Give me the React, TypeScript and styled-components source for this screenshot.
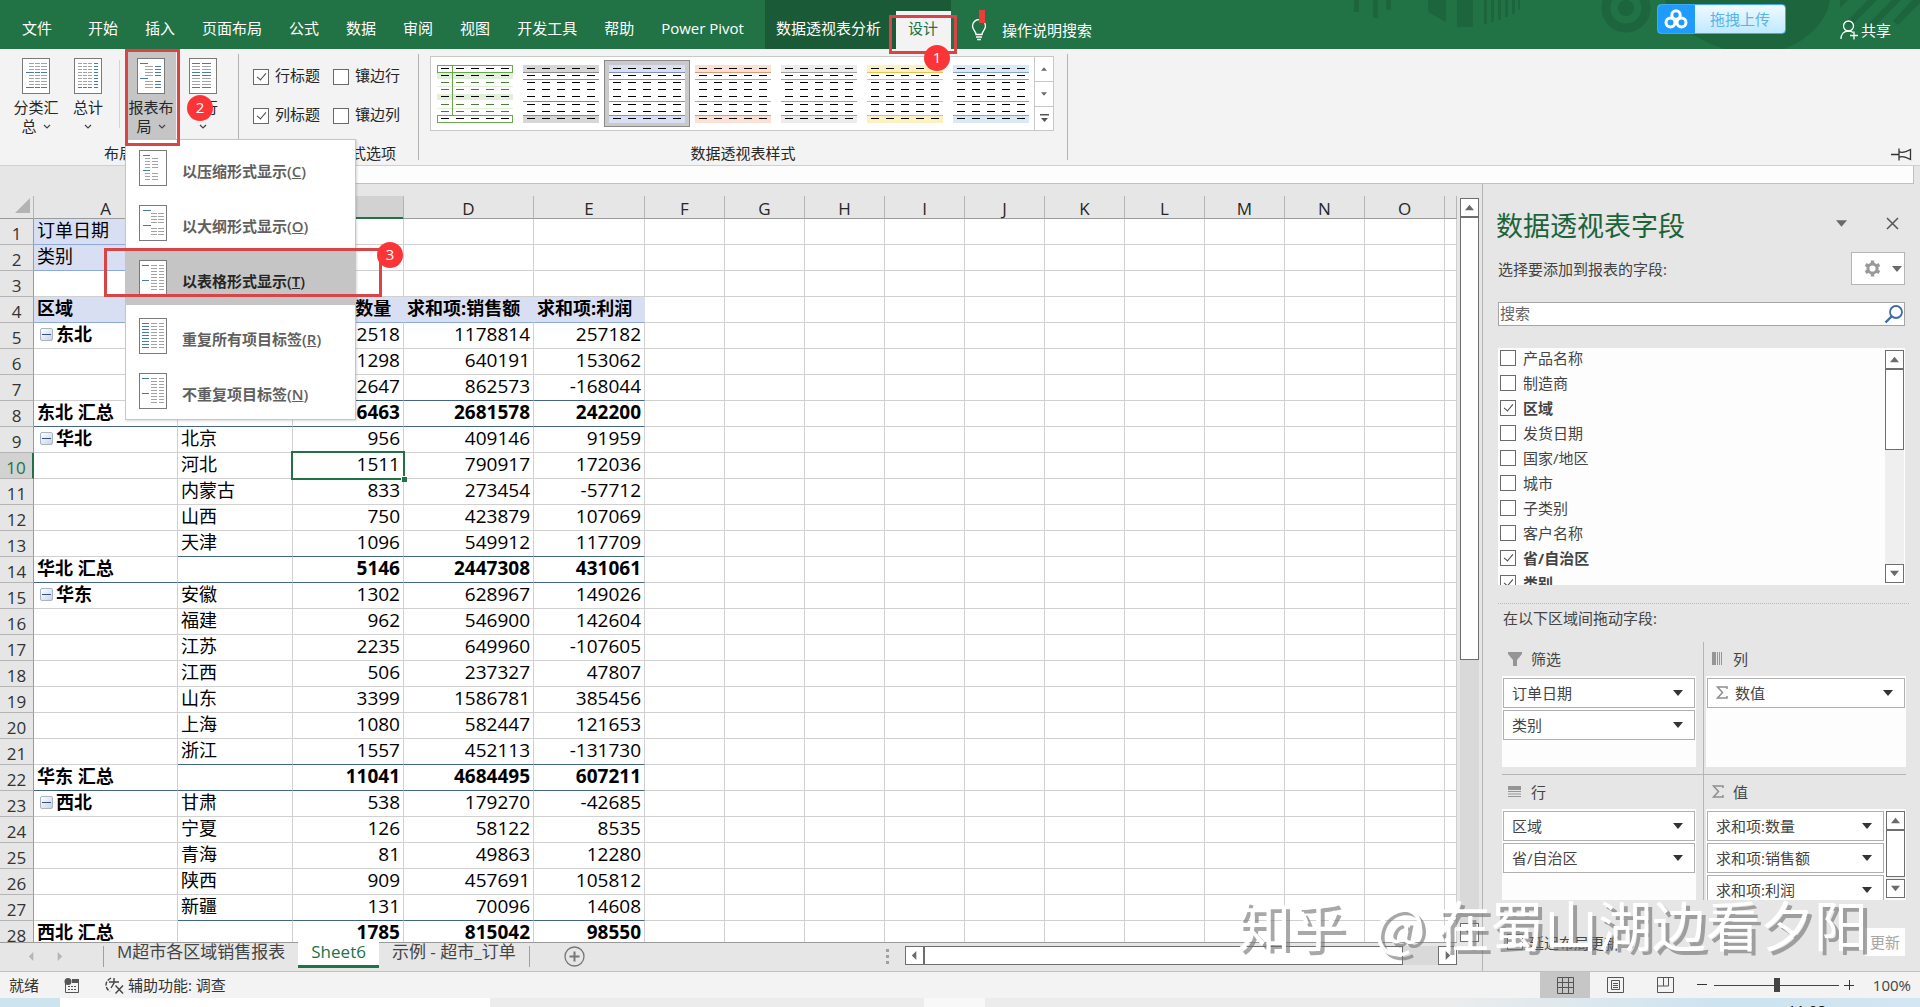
import React from "react";
import styled, { createGlobalStyle, css } from "styled-components";

const GlobalStyle = createGlobalStyle`
  *, *::before, *::after { box-sizing: border-box; }
  html, body { margin: 0; padding: 0; }
  body { overflow: hidden; }
  body, button, input {
    font-family: "Open Sans", "Noto Sans CJK SC", sans-serif;
    font-size: 15px;
    color: #262626;
  }
  button { border: 0; padding: 0; margin: 0; background: none; cursor: default; }
`;

const green = "#217346";
const red = "#d94546";

const Shell = styled.div`
  position: relative;
  display: flex;
  flex-direction: column;
  height: 100vh;
  min-width: 1200px;
  overflow: hidden;
  background: #e6e6e6;
`;

/* ---------- annotations ---------- */

const Mark = styled.span<{ $top: number; $right: number; $bottom: number; $left: number }>`
  position: absolute;
  z-index: 5;
  top: ${(p) => p.$top}px;
  right: ${(p) => p.$right}px;
  bottom: ${(p) => p.$bottom}px;
  left: ${(p) => p.$left}px;
  border: 3px solid ${red};
  pointer-events: none;
`;

const Badge = styled.span<{ $top: number; $left: number }>`
  position: absolute;
  z-index: 6;
  top: ${(p) => p.$top}px;
  left: ${(p) => p.$left}px;
  width: 26px;
  height: 26px;
  border-radius: 50%;
  background: #fb3537;
  color: #fff;
  font-size: 15px;
  line-height: 24px;
  text-align: center;
`;

/* ---------- title / tab bar ---------- */

const TabBar = styled.header`
  position: relative;
  display: flex;
  align-items: stretch;
  height: 49px;
  flex: none;
  padding-left: 8px;
  background: ${green};
`;

const Decor = styled.svg`
  position: absolute;
  right: 0;
  top: 0;
`;

const RibbonTab = styled.button<{ $file?: boolean }>`
  padding: 7px 13px 0 14px;
  margin-right: ${(p) => (p.$file ? 9 : 0)}px;
  color: #fff;
  line-height: 20px;
  white-space: nowrap;
`;

const ContextTabs = styled.div`
  display: flex;
  align-items: stretch;
  margin-left: 8px;
  background: #1a5a37;
`;

const ContextTab = styled(RibbonTab)`
  padding: 7px 15px 0 11px;
`;

const ActiveTab = styled(RibbonTab)`
  position: relative;
  margin-top: 11px;
  padding: 0 13px 4px 12px;
  background: #f3f3f3;
  color: ${green};
`;

const TellMe = styled.button`
  position: relative;
  display: flex;
  align-items: center;
  gap: 15px;
  margin-left: 20px;
  padding-top: 10px;
  color: #fff;
  line-height: 20px;
`;

const RedFlag = styled.span`
  position: absolute;
  left: 8px;
  top: 10px;
  width: 6px;
  height: 13px;
  background: #ee3b3b;
`;

const TabRight = styled.div`
  position: relative;
  display: flex;
  align-items: flex-start;
  margin-left: auto;
  padding-right: 29px;
  gap: 54px;
`;

const Upload = styled.button`
  display: flex;
  width: 129px;
  height: 30px;
  margin-top: 4px;
  border: 1px solid #3fa9f5;
  border-radius: 4px;
  overflow: hidden;
  background: linear-gradient(#f0faff, #bfe9ff);
  color: #58b4ea;
`;

const UploadIcon = styled.span`
  display: flex;
  align-items: center;
  justify-content: center;
  width: 37px;
  height: 100%;
  background: #1e9bfd;
`;

const UploadText = styled.span`
  flex: 1;
  line-height: 28px;
`;

const Share = styled.button`
  display: flex;
  align-items: center;
  gap: 2px;
  padding-top: 20px;
  color: #fff;
  line-height: 20px;
`;

/* ---------- ribbon ---------- */

const Ribbon = styled.section`
  position: relative;
  z-index: 3;
  display: flex;
  height: 117px;
  flex: none;
  background: #f3f3f3;
  border-bottom: 1px solid #d0d0d0;
`;

const Group = styled.div<{ $w?: number }>`
  display: flex;
  flex-direction: column;
  width: ${(p) => (p.$w ? p.$w + "px" : "auto")};
`;

const GroupBody = styled.div`
  display: flex;
  flex: 1;
`;

const GroupLabel = styled.div`
  height: 22px;
  line-height: 20px;
  text-align: center;
`;

const Sep = styled.span`
  width: 1px;
  margin: 5px 0;
  background: #b3b3b3;
`;

const ButtonRow = styled(GroupBody)`
  gap: 2px;
  padding: 1px 0 0 11px;
  align-items: flex-start;
`;

const SmallSep = styled.span`
  width: 1px;
  height: 68px;
  margin: 10px 4px 0;
  background: #d4d4d4;
`;

const Anchor = styled.div`
  position: relative;
`;

const BigButton = styled.button<{ $on?: boolean }>`
  display: flex;
  flex-direction: column;
  align-items: center;
  gap: 4px;
  width: 50px;
  height: 89px;
  padding-top: 8px;
  background: ${(p) => (p.$on ? "#c5c5c5" : "transparent")};
  line-height: 19px;
  white-space: nowrap;
`;

const LabelLine = styled.span`
  display: flex;
  align-items: center;
  justify-content: center;
  gap: 6px;
  height: 19px;
`;

const Menu = styled.ul`
  position: absolute;
  z-index: 4;
  top: 89px;
  left: -1px;
  width: 231px;
  margin: 0;
  padding: 0 0 1px;
  list-style: none;
  background: #fff;
  border: 1px solid #c6c6c6;
  box-shadow: 1px 1px 2px rgba(0, 0, 0, 0.15);
`;

const MenuItem = styled.li<{ $gap?: boolean }>`
  position: relative;
  margin-top: ${(p) => (p.$gap ? 3 : 0)}px;
`;

const MenuButton = styled.button<{ $on?: boolean }>`
  display: flex;
  align-items: flex-start;
  gap: 15px;
  width: 100%;
  height: 55px;
  padding: 10px 0 0 13px;
  background: ${(p) => (p.$on ? "#c5c5c5" : "transparent")};
  color: ${(p) => (p.$on ? "#262626" : "#5f5f5f")};
  font-weight: 600;
  line-height: 42px;
  white-space: nowrap;
`;

const Checks = styled.div`
  display: grid;
  grid-template-columns: 80px 80px;
  grid-auto-rows: 39px;
  padding: 8px 0 0 14px;
`;

const CheckLabel = styled.label<{ $bold?: boolean }>`
  display: flex;
  align-items: center;
  gap: 6px;
  font-weight: ${(p) => (p.$bold ? 700 : 400)};
  white-space: nowrap;
`;

const CheckText = styled.span`
  padding-bottom: 4px;
  line-height: 20px;
`;

const CheckBox = styled.input.attrs({ type: "checkbox" })`
  appearance: none;
  position: relative;
  flex: none;
  width: 16px;
  height: 16px;
  margin: 0;
  border: 1px solid #6a6a6a;
  background: #fff;
  &:checked::after {
    content: "";
    position: absolute;
    left: 5px;
    top: 1px;
    width: 5px;
    height: 9px;
    border: solid #444;
    border-width: 0 1px 1px 0;
    transform: rotate(40deg);
  }
`;

const Gallery = styled.div`
  display: flex;
  width: 624px;
  height: 75px;
  margin: 7px 13px 0 11px;
  padding-left: 1px;
  background: #fff;
  border: 1px solid #c8c8c8;
`;

const Thumb = styled.button<{ $on?: boolean }>`
  display: flex;
  align-items: center;
  justify-content: center;
  width: 86px;
  height: 67px;
  margin-top: 3px;
  border: 1px solid ${(p) => (p.$on ? "#8a8a8a" : "transparent")};
  background: ${(p) => (p.$on ? "#cacaca" : "transparent")};
`;

const GalleryScroll = styled.div`
  display: grid;
  grid-template-rows: 1fr 1fr 1fr;
  width: 19px;
  border-left: 1px solid #c8c8c8;
  & > button + button { border-top: 1px solid #c8c8c8; }
`;

const CenterButton = styled.button`
  display: flex;
  align-items: center;
  justify-content: center;
`;

const PinButton = styled.button`
  margin: auto 8px 0 auto;
  height: 20px;
`;

const FormulaBar = styled.input`
  display: block;
  flex: none;
  height: 18px;
  margin: 0 6px 0 200px;
  padding: 0 6px;
  border: 0;
  border-right: 1px solid #c0c0c0;
  border-bottom: 1px solid #c0c0c0;
  background: #fdfdfd;
  outline: none;
`;

/* ---------- work area ---------- */

const Work = styled.main`
  display: flex;
  flex: 1;
  min-height: 0;
`;

const Left = styled.div`
  display: flex;
  flex-direction: column;
  flex: 1;
  min-width: 0;
`;

const SheetRow = styled.div`
  display: flex;
  flex: 1;
  min-height: 0;
  padding-top: 12px;
`;

const SheetView = styled.div`
  flex: 1;
  min-width: 0;
  overflow: hidden;
`;

const Sheet = styled.table`
  width: 100%;
  table-layout: fixed;
  border-collapse: separate;
  border-spacing: 0;
  background: #fff;
  color: #000;
`;

const ColHead = styled.th<{ $on?: boolean }>`
  height: 23px;
  padding: 4px 0 0;
  border-right: 1px solid #b5b5b5;
  border-bottom: 1px solid #9b9b9b;
  background: ${(p) => (p.$on ? "#d2d2d2" : "#e6e6e6")};
  font-size: 17px;
  font-weight: 400;
  line-height: 18px;
  color: #262626;
  ${(p) => p.$on && css`box-shadow: inset 0 -1px 0 ${green}; border-bottom-color: ${green};`}
`;

const Corner = styled.th`
  padding: 0 3px 3px 0;
  border-right: 1px solid #b5b5b5;
  border-bottom: 1px solid #9b9b9b;
  background: #e6e6e6;
  text-align: right;
  line-height: 0;
`;

const RowHead = styled.th<{ $on?: boolean }>`
  height: 26px;
  padding: 4px 0 0;
  border-right: 1px solid #9b9b9b;
  border-bottom: 1px solid #b5b5b5;
  background: ${(p) => (p.$on ? "#d2d2d2" : "#e6e6e6")};
  color: ${(p) => (p.$on ? green : "#333")};
  font-size: 17px;
  font-weight: 400;
  line-height: 21px;
  ${(p) => p.$on && css`border-right: 2px solid ${green};`}
`;

type Line = "grid" | "soft" | "strong";
const lineColor: Record<Line, string> = { grid: "#d0d0d0", soft: "#8ea9db", strong: "#44648c" };

const Cell = styled.td<{ $line?: Line; $fill?: boolean; $bold?: boolean; $num?: boolean }>`
  position: relative;
  height: 26px;
  padding: 0 3px 2px;
  border-right: 1px solid ${(p) => (p.$fill ? "#d9dff2" : "#d0d0d0")};
  border-bottom: 1px solid ${(p) => lineColor[p.$line || "grid"]};
  background: ${(p) => (p.$fill ? "#d9dff2" : "#fff")};
  font-size: ${(p) => (p.$num ? 19 : 18)}px;
  font-weight: ${(p) => (p.$bold ? 700 : 400)};
  line-height: 23px;
  text-align: ${(p) => (p.$num ? "right" : "left")};
  white-space: nowrap;
`;

const CellInner = styled.span`
  display: flex;
  align-items: center;
  gap: 3px;
  height: 23px;
  padding-left: 3px;
`;

const Collapse = styled.button`
  display: flex;
  align-items: center;
  justify-content: center;
  width: 13px;
  height: 13px;
  border: 1px solid #a9b4c4;
  border-radius: 2px;
  background: linear-gradient(135deg, #fff, #c9d4e4);
  &::after { content: ""; width: 9px; height: 1px; background: #33518a; }
`;

const Selection = styled.span`
  position: absolute;
  z-index: 1;
  top: -2px;
  right: -2px;
  bottom: -2px;
  left: -2px;
  border: 2px solid ${green};
  &::after {
    content: "";
    position: absolute;
    right: -4px;
    bottom: -4px;
    width: 6px;
    height: 6px;
    background: ${green};
    border: solid #fff;
    border-width: 1px 0 0 1px;
  }
`;

/* ---------- scroll bars ---------- */

const VScroll = styled.div<{ $m?: string; $track?: string }>`
  display: flex;
  flex-direction: column;
  flex: none;
  width: 19px;
  margin: ${(p) => p.$m || "0"};
  background: ${(p) => p.$track || "#d9d9d9"};
`;

const ScrollButton = styled(CenterButton)`
  flex: none;
  width: 19px;
  height: 19px;
  border: 1px solid #6e6e6e;
  background: #fff;
`;

const VThumb = styled.span<{ $size: string }>`
  flex: none;
  height: ${(p) => p.$size};
  margin-bottom: auto;
  border: 1px solid #6e6e6e;
  background: #fff;
`;

const HScroll = styled.div`
  display: flex;
  flex: none;
  width: 552px;
  height: 19px;
  margin: 4px 25px 0 12px;
  background: #d9d9d9;
`;

const HThumb = styled.span`
  width: 479px;
  margin-right: auto;
  border: 1px solid #6e6e6e;
  background: #fff;
`;

/* ---------- sheet tabs ---------- */

const SheetTabs = styled.nav`
  display: flex;
  align-items: flex-start;
  flex: none;
  height: 29px;
  padding-left: 17px;
  background: linear-gradient(#9b9b9b, #9b9b9b) top left / calc(100% - 25px) 1px no-repeat #e6e6e6;
`;

const NavArrow = styled(CenterButton)`
  width: 28px;
  height: 28px;
`;

const TabSep = styled.span`
  width: 1px;
  height: 21px;
  margin-top: 4px;
  background: #a0a0a0;
`;

const TabList = styled.div`
  display: flex;
  margin-left: 30px;
`;

const SheetTab = styled.button<{ $on?: boolean }>`
  height: 26px;
  padding: 0 13px 3px;
  background: ${(p) => (p.$on ? "#fff" : "transparent")};
  border-bottom: 3px solid ${(p) => (p.$on ? green : "transparent")};
  color: ${(p) => (p.$on ? green : "#444")};
  font-size: 17px;
  line-height: 20px;
  white-space: nowrap;
`;

const AddSheet = styled(CenterButton)`
  margin: 4px 0 0 34px;
`;

const Grip = styled.span`
  width: 3px;
  height: 15px;
  margin: 7px 4px 0 auto;
  background: repeating-linear-gradient(#a0a0a0 0 3px, transparent 3px 6px);
`;

/* ---------- field pane ---------- */

const Pane = styled.aside`
  display: flex;
  flex-direction: column;
  flex: none;
  width: 438px;
  padding: 22px 15px 15px;
  border-left: 1px solid #b5b5b5;
  color: #444;
`;

const PaneHead = styled.div`
  display: flex;
  align-items: flex-start;
  height: 40px;
`;

const PaneTitle = styled.h2`
  flex: 1;
  margin: 0 0 0 -2px;
  font-size: 27px;
  font-weight: 400;
  line-height: 40px;
  color: #1d6339;
`;

const HeadButton = styled(CenterButton)`
  width: 25px;
  height: 34px;
  margin-left: 26px;
`;

const SubRow = styled.div`
  display: flex;
  justify-content: space-between;
  align-items: center;
  height: 33px;
  margin-top: 6px;
`;

const GearButton = styled.button`
  display: flex;
  align-items: center;
  gap: 11px;
  width: 54px;
  height: 33px;
  padding-left: 12px;
  border: 1px solid #b5b5b5;
  background: #fff;
`;

const SearchBox = styled.label`
  display: flex;
  align-items: center;
  flex: none;
  height: 24px;
  margin-top: 17px;
  border: 1px solid #a6a6a6;
  background: #fff;
`;

const SearchInput = styled.input`
  flex: 1;
  height: 22px;
  padding: 0 1px 2px;
  border: 0;
  outline: none;
  background: transparent;
  &::placeholder { color: #666; opacity: 1; }
`;

const FieldBox = styled.div`
  display: flex;
  flex: 1;
  min-height: 0;
  margin-top: 22px;
  background: #fdfdfd;
  overflow: hidden;
`;

const FieldList = styled.div`
  flex: 1;
  padding: 1px 0 0 2px;
  & > label { height: 25px; padding-bottom: 8px; gap: 7px; }
`;

const LabelText = styled.span`
  padding-top: 1px;
  line-height: 20px;
`;

const Dotted = styled.div`
  flex: none;
  height: 1px;
  margin: 18px -4px 0 0;
  border-top: 1px dotted #b9b9b9;
`;

const Hint = styled.div`
  margin-top: 4px;
  padding-left: 5px;
  line-height: 20px;
`;

const Areas = styled.div`
  display: grid;
  grid-template-columns: 202px 1fr;
  margin: 14px -1px 0 4px;
`;

const Area = styled.section<{ $left?: boolean; $top?: boolean }>`
  padding-right: ${(p) => (p.$left ? 7 : 0)}px;
  padding-left: ${(p) => (p.$left ? 0 : 2)}px;
  padding-bottom: ${(p) => (p.$top ? 7 : 0)}px;
  border-right: ${(p) => (p.$left ? "1px solid #b5b5b5" : "0")};
  border-bottom: ${(p) => (p.$top ? "1px solid #b5b5b5" : "0")};
`;

const AreaTitle = styled.h3`
  display: flex;
  align-items: center;
  gap: 9px;
  height: 34px;
  margin: 0;
  padding: 0 0 1px 6px;
  font-size: 15px;
  font-weight: 400;
`;

const AreaBox = styled.div`
  display: flex;
  height: 91px;
  padding: 2px 1px 0;
  overflow: hidden;
  background: #fdfdfd;
`;

const AreaItems = styled.div`
  display: flex;
  flex-direction: column;
  flex: 1;
  gap: 2px;
`;

const AreaItem = styled.button`
  display: flex;
  align-items: center;
  flex: none;
  gap: 7px;
  height: 30px;
  padding: 0 11px 1px 8px;
  border: 1px solid #b0b0b0;
  background: #fff;
  color: #444;
  line-height: 20px;
  & > svg:last-child { margin-left: auto; }
`;

const Defer = styled.div`
  display: flex;
  align-items: center;
  justify-content: space-between;
  height: 28px;
  margin-top: 28px;
  padding-left: 9px;
`;

const UpdateButton = styled.button`
  width: 40px;
  height: 28px;
  padding-bottom: 2px;
  background: #fdfdfd;
  color: #a6a6a6;
`;

/* ---------- status bar ---------- */

const Status = styled.footer`
  display: flex;
  align-items: center;
  flex: none;
  height: 27px;
  padding-left: 9px;
  border-top: 1px solid #c0c0c0;
  background: #f3f3f3;
  color: #444;
`;

const StatusItem = styled.button`
  display: flex;
  align-items: center;
  gap: 4px;
  margin-right: 25px;
  line-height: 20px;
  color: #333;
`;

const ViewButton = styled(CenterButton)<{ $on?: boolean }>`
  width: 50px;
  height: 26px;
  background: ${(p) => (p.$on ? "#c6c6c6" : "transparent")};
`;

const Views = styled.div`
  display: flex;
  margin: 0 6px 0 auto;
`;

const ZoomButton = styled(CenterButton)`
  width: 12px;
  height: 20px;
`;

const Zoom = styled.input.attrs({ type: "range" })`
  appearance: none;
  width: 125px;
  height: 14px;
  margin: 0 4px 0 6px;
  background: linear-gradient(#444, #444) center / 100% 1px no-repeat;
  &::-webkit-slider-thumb {
    appearance: none;
    width: 6px;
    height: 14px;
    background: #444;
  }
`;

const ZoomText = styled.button`
  width: 48px;
  margin: 0 9px 0 8px;
  text-align: right;
  line-height: 20px;
  color: #444;
`;

const Taskbar = styled.div`
  display: flex;
  flex: none;
  height: 9px;
  overflow: hidden;
  background: linear-gradient(90deg, #ececec 75%, #cde3f0 90%, #d3e6f1);
`;

const TaskPart = styled.span<{ $w: number; $ml?: number; $bg: string }>`
  width: ${(p) => p.$w}px;
  margin-left: ${(p) => p.$ml || 0}px;
  background: ${(p) => p.$bg};
`;

const Clock = styled.span`
  margin-left: auto;
  padding: 2px 94px 0 0;
  font-size: 15px;
  line-height: 20px;
  color: #111;
`;

const Watermark = styled.div`
  position: absolute;
  z-index: 8;
  right: 52px;
  bottom: 56px;
  display: flex;
  gap: 11px;
  font-family: "Noto Sans CJK SC", sans-serif;
  font-size: 54px;
  line-height: 54px;
  color: #fff;
  text-shadow: 4px 4px 0 rgba(110, 110, 110, 0.6);
  white-space: nowrap;
  pointer-events: none;
`;

const Site = styled.span`
  margin-right: 18px;
`;

/* ---------- drawings ---------- */

const Chevron = () => (
  <svg width="8" height="6" viewBox="0 0 8 6" fill="none" stroke="#444" strokeWidth="1.2">
    <path d="M1 1l3 3 3-3" />
  </svg>
);

const Tri = ({ dir = "down", size = 9, color = "#6a6a6a" }: { dir?: string; size?: number; color?: string }) => {
  const d: Record<string, string> = {
    down: "M0 2h10L5 8z",
    up: "M0 8h10L5 2z",
    left: "M7 0v10L2 5z",
    right: "M3 0v10l5-5z",
  };
  return (
    <svg width={size} height={size} viewBox="0 0 10 10">
      <path d={d[dir]} fill={color} />
    </svg>
  );
};

type DocKind = "subtotal" | "total" | "layout" | "blank" | "compact" | "outline" | "tabular" | "repeat";

const DocIcon = ({ kind }: { kind: DocKind }) => {
  const lines: React.ReactNode[] = [];
  const grey = "#a3a3a3";
  const blue = "#4a7ba3";
  const put = (x: number, y: number, w: number, c: string) =>
    lines.push(<rect key={lines.length} x={x} y={y} width={w} height="1" fill={c} />);
  for (let i = 0; i < 9; i++) {
    const y = 5 + i * 3;
    if (kind === "subtotal") {
      const c = i === 3 || i === 8 ? blue : grey;
      put(c === blue ? 4 : 7, y, c === blue ? 8 : 5, c);
      put(13, y, 5, c);
      put(19, y, 6, c);
    } else if (kind === "total") {
      [4, 9, 14].forEach((x) => put(x, y, 4, i === 8 ? blue : grey));
      put(20, y, 4, blue);
    } else if (kind === "blank") {
      const c = i % 4 === 0 || i === 3 ? blue : grey;
      put(3, y, 8, c);
      put(13, y, 9, c);
    } else if (kind === "layout") {
      if (i === 0 || i === 5) put(3, y, 8, blue);
      else {
        put(8, y, 8, grey);
        put(18, y, 6, blue);
      }
    } else if (kind === "compact") {
      if (i === 0 || i === 5) put(4, y, 7, blue);
      else {
        put(6, y, 5, grey);
        put(13, y, 6, grey);
      }
    } else if (kind === "outline") {
      if (i === 0 || i === 5) put(4, y, 8, blue);
      else {
        put(12, y, 6, grey);
        put(19, y, 6, grey);
      }
    } else {
      if (kind === "repeat") put(3, y, 7, blue);
      else if (i === 0 || i === 5) put(3, y, 7, blue);
      put(12, y, 6, grey);
      put(20, y, 5, grey);
    }
  }
  return (
    <svg width="28" height="36" viewBox="0 0 28 36" shapeRendering="crispEdges">
      <rect x="0.5" y="0.5" width="27" height="35" fill="#fff" stroke="#7a7a7a" />
      {lines}
    </svg>
  );
};

const StyleThumb = ({ band, line, classic }: { band: string; line: string; classic?: boolean }) => {
  const rows = [0, 1, 2, 3, 4, 5, 6, 7];
  return (
    <svg width="76" height="58" viewBox="0 0 76 58" shapeRendering="crispEdges">
      <rect width="76" height="58" fill="#fff" />
      {classic ? (
        <>
          <rect y="8" width="76" height="6" fill={band} />
          <rect y="29" width="76" height="6" fill={band} />
          <rect y="21" width="76" height="1" fill={band} />
          <rect y="43" width="76" height="1" fill={band} />
          <rect x="0.5" y="0.5" width="75" height="7" fill="none" stroke={line} />
          <rect x="0.5" y="50.5" width="75" height="7" fill="none" stroke={line} />
          <rect x="15" y="0" width="1" height="50" fill={line} />
        </>
      ) : (
        <>
          <rect width="76" height="7" fill={band} />
          <rect y="51" width="76" height="7" fill={band} />
          <rect y="7" width="76" height="1" fill={line} />
          <rect y="14" width="76" height="1" fill={line} />
          <rect y="36" width="76" height="1" fill={line} />
          <rect y="50" width="76" height="1" fill={line} />
        </>
      )}
      {rows.map((r) =>
        [4, 19, 34, 49, 64].map((x) => (
          <rect
            key={`${r}-${x}`}
            x={x}
            y={3 + r * 7 + (r > 4 ? 1 : 0)}
            width="8"
            height="1"
            fill={classic && [2, 3, 5, 6].includes(r) ? "#4d7a3a" : "#000"}
          />
        ))
      )}
    </svg>
  );
};

const Sigma = () => (
  <svg width="12" height="13" viewBox="0 0 12 13" fill="none" stroke="#8f8f8f" strokeWidth="1.5">
    <path d="M11 3V1H1.5L6.500 6.500 1.500 12H11v-2" />
  </svg>
);

const Funnel = () => (
  <svg width="14" height="14" viewBox="0 0 14 14">
    <path d="M0 0h14v2L9 8v6H5V8L0 2z" fill="#959595" />
  </svg>
);

const ColsIcon = () => (
  <svg width="12" height="13" viewBox="0 0 12 13" fill="#959595">
    <path d="M0 0h4v13H0zM5 0h1v13H5zM7 0h1v13H7zM9 0h1v13H9z" />
  </svg>
);

const RowsIcon = () => (
  <svg width="14" height="12" viewBox="0 0 14 12" fill="#959595">
    <path d="M0 0h13v4H0zM0 5h13v1H0zM0 7.500h13v1H0zM0 10h13v1H0z" />
  </svg>
);

/* ---------- data ---------- */

const tabs = ["文件", "开始", "插入", "页面布局", "公式", "数据", "审阅", "视图", "开发工具", "帮助", "Power Pivot"];

const thumbs = [
  { name: "浅色 绿", band: "#e2efda", line: "#6aa84f", classic: true },
  { name: "浅色 灰", band: "#d6d6d6", line: "#8c8c8c" },
  { name: "浅色 蓝", band: "#d9dff5", line: "#7e93c0", on: true },
  { name: "浅色 橙", band: "#fbe0d3", line: "#dd9a78" },
  { name: "浅色 银", band: "#ececec", line: "#a5a5a5" },
  { name: "浅色 黄", band: "#fff0c4", line: "#e8c54a" },
  { name: "浅色 天蓝", band: "#dbe9f7", line: "#84a8cc" },
];

const menuItems: { text: string; key: string; kind: DocKind; on?: boolean; gap?: boolean }[] = [
  { text: "以压缩形式显示", key: "C", kind: "compact" },
  { text: "以大纲形式显示", key: "O", kind: "outline" },
  { text: "以表格形式显示", key: "T", kind: "tabular", on: true },
  { text: "重复所有项目标签", key: "R", kind: "repeat", gap: true },
  { text: "不重复项目标签", key: "N", kind: "tabular" },
];

type Row = { a?: string; b?: string; v?: string[]; kind?: "filter" | "head" | "region" | "total" };
const rows: Row[] = [
  { a: "订单日期", kind: "filter" },
  { a: "类别", kind: "filter" },
  {},
  { a: "区域", v: ["求和项:数量", "求和项:销售额", "求和项:利润"], kind: "head" },
  { a: "东北", v: ["2518", "1178814", "257182"], kind: "region" },
  { v: ["1298", "640191", "153062"] },
  { v: ["2647", "862573", "-168044"] },
  { a: "东北 汇总", v: ["6463", "2681578", "242200"], kind: "total" },
  { a: "华北", b: "北京", v: ["956", "409146", "91959"], kind: "region" },
  { b: "河北", v: ["1511", "790917", "172036"] },
  { b: "内蒙古", v: ["833", "273454", "-57712"] },
  { b: "山西", v: ["750", "423879", "107069"] },
  { b: "天津", v: ["1096", "549912", "117709"] },
  { a: "华北 汇总", v: ["5146", "2447308", "431061"], kind: "total" },
  { a: "华东", b: "安徽", v: ["1302", "628967", "149026"], kind: "region" },
  { b: "福建", v: ["962", "546900", "142604"] },
  { b: "江苏", v: ["2235", "649960", "-107605"] },
  { b: "江西", v: ["506", "237327", "47807"] },
  { b: "山东", v: ["3399", "1586781", "385456"] },
  { b: "上海", v: ["1080", "582447", "121653"] },
  { b: "浙江", v: ["1557", "452113", "-131730"] },
  { a: "华东 汇总", v: ["11041", "4684495", "607211"], kind: "total" },
  { a: "西北", b: "甘肃", v: ["538", "179270", "-42685"], kind: "region" },
  { b: "宁夏", v: ["126", "58122", "8535"] },
  { b: "青海", v: ["81", "49863", "12280"] },
  { b: "陕西", v: ["909", "457691", "105812"] },
  { b: "新疆", v: ["131", "70096", "14608"] },
  { a: "西北 汇总", v: ["1785", "815042", "98550"], kind: "total" },
];

const colWidths = [34, 144, 115, 111, 130, 111, 80, 80, 80, 80, 80, 80, 80, 80, 80, 80];
const letters = "ABCDEFGHIJKLMNO".split("");

const fields: [string, boolean][] = [
  ["产品名称", false],
  ["制造商", false],
  ["区域", true],
  ["发货日期", false],
  ["国家/地区", false],
  ["城市", false],
  ["子类别", false],
  ["客户名称", false],
  ["省/自治区", true],
  ["类别", true],
];

/* ---------- parts ---------- */

const SheetTable = () => (
  <Sheet>
    <colgroup>
      {colWidths.map((w, i) => (
        <col key={i} width={w} />
      ))}
      <col />
    </colgroup>
    <thead>
      <tr>
        <Corner>
          <svg width="15" height="15" viewBox="0 0 15 15">
            <path d="M15 0v15H0z" fill="#b3b3b3" />
          </svg>
        </Corner>
        {letters.map((l) => (
          <ColHead key={l} $on={l === "C"}>
            {l}
          </ColHead>
        ))}
        <ColHead />
      </tr>
    </thead>
    <tbody>
      {rows.map((r, i) => {
        const total = r.kind === "total";
        const head = r.kind === "head";
        const beforeTotal = rows[i + 1]?.kind === "total";
        const line: Line = total || beforeTotal ? "strong" : head ? "soft" : "grid";
        return (
          <tr key={i}>
            <RowHead $on={i === 9}>{i + 1}</RowHead>
            <Cell
              $fill={head || r.kind === "filter"}
              $bold={total || head || r.kind === "region"}
              $line={total ? "strong" : head || r.kind === "filter" ? "soft" : "grid"}
            >
              {r.kind === "region" ? (
                <CellInner>
                  <Collapse aria-label="折叠" />
                  {r.a}
                </CellInner>
              ) : (
                r.a
              )}
            </Cell>
            <Cell $fill={head} $line={line}>
              {r.b}
            </Cell>
            {[0, 1, 2].map((c) => (
              <Cell key={c} $fill={head} $line={line} $bold={total || head} $num={!head}>
                {r.v?.[c]}
                {i === 9 && c === 0 && <Selection />}
              </Cell>
            ))}
            {Array.from({ length: 11 }, (_, c) => (
              <Cell key={c} />
            ))}
          </tr>
        );
      })}
    </tbody>
  </Sheet>
);

const Item = ({ text, sigma }: { text: string; sigma?: boolean }) => (
  <AreaItem>
    {sigma && <Sigma />}
    {text}
    <Tri size={10} color="#333" />
  </AreaItem>
);

const FieldPane = () => (
  <Pane>
    <PaneHead>
      <PaneTitle>数据透视表字段</PaneTitle>
      <HeadButton aria-label="任务窗格选项">
        <Tri size={11} />
      </HeadButton>
      <HeadButton aria-label="关闭">
        <svg width="13" height="13" viewBox="0 0 13 13" stroke="#555" strokeWidth="1.5">
          <path d="M1 1l11 11M12 1L1 12" />
        </svg>
      </HeadButton>
    </PaneHead>
    <SubRow>
      <span>选择要添加到报表的字段:</span>
      <GearButton aria-label="工具">
        <svg width="17" height="17" viewBox="0 0 17 17">
          <circle cx="8.5" cy="8.5" r="4.600" fill="none" stroke="#999" strokeWidth="3" />
          <g stroke="#999" strokeWidth="3.400">
            <path d="M8.500 0.500v3M8.500 13.500v3M1.600 4.500l2.600 1.500M12.800 11l2.600 1.500M15.400 4.500l-2.600 1.500M4.200 11l-2.600 1.500" />
          </g>
        </svg>
        <Tri size={10} />
      </GearButton>
    </SubRow>
    <SearchBox>
      <SearchInput placeholder="搜索" aria-label="搜索" />
      <svg width="20" height="20" viewBox="0 0 20 20" fill="none" stroke="#3f6c9c" strokeWidth="1.800">
        <circle cx="12" cy="8" r="6" />
        <path d="M7.500 12.500L1.500 18.500" strokeWidth="2.400" />
      </svg>
    </SearchBox>
    <FieldBox>
      <FieldList>
        {fields.map(([name, on]) => (
          <CheckLabel key={name} $bold={on}>
            <CheckBox defaultChecked={on} />
            <LabelText>{name}</LabelText>
          </CheckLabel>
        ))}
      </FieldList>
      <VScroll $m="2px 1px 2px 0" $track="#efefef">
        <ScrollButton aria-label="向上">
          <Tri dir="up" />
        </ScrollButton>
        <VThumb $size="81px" />
        <ScrollButton aria-label="向下">
          <Tri />
        </ScrollButton>
      </VScroll>
    </FieldBox>
    <Dotted />
    <Hint>在以下区域间拖动字段:</Hint>
    <Areas>
      <Area $left $top>
        <AreaTitle>
          <Funnel />
          筛选
        </AreaTitle>
        <AreaBox>
          <AreaItems>
            <Item text="订单日期" />
            <Item text="类别" />
          </AreaItems>
        </AreaBox>
      </Area>
      <Area $top>
        <AreaTitle>
          <ColsIcon />
          列
        </AreaTitle>
        <AreaBox>
          <AreaItems>
            <Item text="数值" sigma />
          </AreaItems>
        </AreaBox>
      </Area>
      <Area $left>
        <AreaTitle>
          <RowsIcon />
          行
        </AreaTitle>
        <AreaBox>
          <AreaItems>
            <Item text="区域" />
            <Item text="省/自治区" />
          </AreaItems>
        </AreaBox>
      </Area>
      <Area>
        <AreaTitle>
          <Sigma />
          值
        </AreaTitle>
        <AreaBox>
          <AreaItems>
            <Item text="求和项:数量" />
            <Item text="求和项:销售额" />
            <Item text="求和项:利润" />
          </AreaItems>
          <VScroll $m="0 0 2px 2px" $track="#efefef">
            <ScrollButton aria-label="向上">
              <Tri dir="up" />
            </ScrollButton>
            <VThumb $size="47px" />
            <ScrollButton aria-label="向下">
              <Tri />
            </ScrollButton>
          </VScroll>
        </AreaBox>
      </Area>
    </Areas>
    <Defer>
      <CheckLabel>
        <CheckBox />
        延迟布局更新
      </CheckLabel>
      <UpdateButton>更新</UpdateButton>
    </Defer>
  </Pane>
);

const RibbonBar = () => (
  <Ribbon>
    <Group $w={238}>
      <ButtonRow>
        <BigButton>
          <DocIcon kind="subtotal" />
          <span>
            <LabelLine>分类汇</LabelLine>
            <LabelLine>
              总 <Chevron />
            </LabelLine>
          </span>
        </BigButton>
        <BigButton>
          <DocIcon kind="total" />
          <span>
            <LabelLine>总计</LabelLine>
            <LabelLine>
              <Chevron />
            </LabelLine>
          </span>
        </BigButton>
        <SmallSep />
        <Anchor>
          <BigButton $on>
            <DocIcon kind="layout" />
            <span>
              <LabelLine>报表布</LabelLine>
              <LabelLine>
                局 <Chevron />
              </LabelLine>
            </span>
          </BigButton>
          <Menu>
            {menuItems.map((m) => (
              <MenuItem key={m.text} $gap={m.gap}>
                <MenuButton $on={m.on}>
                  <DocIcon kind={m.kind} />
                  <span>
                    {m.text}(<u>{m.key}</u>)
                  </span>
                </MenuButton>
                {m.on && (
                  <>
                    <Mark $top={-2} $right={-27} $bottom={8} $left={-22} />
                    <Badge $top={-8} $left={251}>
                      3
                    </Badge>
                  </>
                )}
              </MenuItem>
            ))}
          </Menu>
          <Mark $top={-1} $right={-4} $bottom={-7} $left={-1} />
        </Anchor>
        <Anchor>
          <BigButton>
            <DocIcon kind="blank" />
            <span>
              <LabelLine>空行</LabelLine>
              <LabelLine>
                <Chevron />
              </LabelLine>
            </span>
          </BigButton>
          <Badge $top={45} $left={9}>
            2
          </Badge>
        </Anchor>
      </ButtonRow>
      <GroupLabel>布局</GroupLabel>
    </Group>
    <Sep />
    <Group $w={179}>
      <GroupBody>
        <Checks>
          {["行标题", "镶边行", "列标题", "镶边列"].map((t, i) => (
            <CheckLabel key={t}>
              <CheckBox defaultChecked={i % 2 === 0} />
              <CheckText>{t}</CheckText>
            </CheckLabel>
          ))}
        </Checks>
      </GroupBody>
      <GroupLabel>数据透视表样式选项</GroupLabel>
    </Group>
    <Sep />
    <Group>
      <GroupBody>
        <Gallery>
          {thumbs.map((t) => (
            <Thumb key={t.name} $on={t.on} aria-label={t.name}>
              <StyleThumb band={t.band} line={t.line} classic={t.classic} />
            </Thumb>
          ))}
          <GalleryScroll>
            <CenterButton aria-label="上一行">
              <Tri dir="up" size={6} />
            </CenterButton>
            <CenterButton aria-label="下一行">
              <Tri size={6} />
            </CenterButton>
            <CenterButton aria-label="其他">
              <svg width="9" height="9" viewBox="0 0 9 9" fill="#555">
                <path d="M0 0h9v1.500H0zM1 4h7L4.500 8z" />
              </svg>
            </CenterButton>
          </GalleryScroll>
        </Gallery>
      </GroupBody>
      <GroupLabel>数据透视表样式</GroupLabel>
    </Group>
    <Sep />
    <PinButton aria-label="固定功能区">
      <svg width="21" height="13" viewBox="0 0 21 13" fill="none" stroke="#333" strokeWidth="1.300">
        <path d="M0 6.500h8M8 0.500v12M8 3.500c3 2 6 1 11.500-2v10C14 8.500 11 7.500 8 9.500" />
      </svg>
    </PinButton>
  </Ribbon>
);

export default function App() {
  return (
    <Shell>
      <GlobalStyle />
      <TabBar>
        <Decor width="600" height="49" viewBox="0 0 600 49" fill="#1d653d">
          <path d="M34 0h5v12h-5zM53 0h5v18h-5zM66 0h5v10h-5z" />
          <path d="M108 0h18v22l-18-10zM137 0h16v27h-16zM164 0h3v24h-3zM171 0h3v22h-3zM178 0h3v20h-3zM185 0h3v17h-3zM192 0h3v14h-3zM198 0h2v10h-2z" />
          <circle cx="306" cy="8" r="20" fill="none" stroke="#1d653d" strokeWidth="9" />
          <circle cx="306" cy="8" r="8" />
          <path d="M345 0h165c-4 22-22 40-46 49h-60c-30-10-52-26-59-49z" />
          <path d="M520 0h8l-8 8zM548 0h9l-26 26-5-4zM572 0h9l-32 32-5-4zM592 0h8v3l-22 22-5-4z" />
        </Decor>
        {tabs.map((t) => (
          <RibbonTab key={t} $file={t === "文件"}>
            {t}
          </RibbonTab>
        ))}
        <ContextTabs>
          <ContextTab>数据透视表分析</ContextTab>
          <ActiveTab>
            设计
            <Mark $top={4} $right={-6} $bottom={-5} $left={-7} />
            <Badge $top={34} $left={28}>
              1
            </Badge>
          </ActiveTab>
        </ContextTabs>
        <TellMe>
          <svg width="16" height="22" viewBox="0 0 16 22" fill="none" stroke="#fff" strokeWidth="1.400">
            <path d="M5 15.500c0-3.500-3.500-4.500-3.500-8.500a6.500 6.500 0 0 1 13 0c0 4-3.500 5-3.500 8.500zM5 18h6M6 20.500h4" />
          </svg>
          <RedFlag />
          操作说明搜索
        </TellMe>
        <TabRight>
          <Upload>
            <UploadIcon>
              <svg width="24" height="20" viewBox="0 0 24 20" fill="none" stroke="#fff" strokeWidth="3">
                <circle cx="12" cy="6" r="4.200" />
                <circle cx="6.500" cy="13.500" r="4.500" />
                <circle cx="17.500" cy="13.500" r="4.500" />
              </svg>
            </UploadIcon>
            <UploadText>拖拽上传</UploadText>
          </Upload>
          <Share>
            <svg width="19" height="20" viewBox="0 0 19 20" fill="none" stroke="#fff" strokeWidth="1.300">
              <circle cx="8.500" cy="6" r="5" />
              <path d="M1 19c0-5 3-8 7.500-8 2 0 3.500.6 4.500 1.500M10 15.500h8M14 11.500v8" />
            </svg>
            共享
          </Share>
        </TabRight>
      </TabBar>
      <RibbonBar />
      <FormulaBar aria-label="编辑栏" />
      <Work>
        <Left>
          <SheetRow>
            <SheetView>
              <SheetTable />
            </SheetView>
            <VScroll $m="2px 3px 0">
              <ScrollButton aria-label="向上滚动">
                <Tri dir="up" />
              </ScrollButton>
              <VThumb $size="calc(60% - 3px)" />
              <ScrollButton aria-label="向下滚动">
                <Tri />
              </ScrollButton>
            </VScroll>
          </SheetRow>
          <SheetTabs>
            <NavArrow aria-label="上一张">
              <Tri dir="left" color="#b5b5b5" />
            </NavArrow>
            <NavArrow aria-label="下一张">
              <Tri dir="right" color="#b5b5b5" />
            </NavArrow>
            <TabList>
              <TabSep />
              <SheetTab>M超市各区域销售报表</SheetTab>
              <SheetTab $on>Sheet6</SheetTab>
              <SheetTab>示例 - 超市_订单</SheetTab>
              <TabSep />
            </TabList>
            <AddSheet aria-label="新工作表">
              <svg width="21" height="21" viewBox="0 0 21 21" fill="none" stroke="#777" strokeWidth="1.300">
                <circle cx="10.500" cy="10.500" r="9.500" />
                <path d="M10.500 5.500v10M5.500 10.500h10" strokeWidth="2" />
              </svg>
            </AddSheet>
            <Grip />
            <HScroll>
              <ScrollButton aria-label="向左滚动">
                <Tri dir="left" />
              </ScrollButton>
              <HThumb />
              <ScrollButton aria-label="向右滚动">
                <Tri dir="right" />
              </ScrollButton>
            </HScroll>
          </SheetTabs>
        </Left>
        <FieldPane />
      </Work>
      <Status>
        <StatusItem>就绪</StatusItem>
        <StatusItem aria-label="宏录制">
          <svg width="16" height="15" viewBox="0 0 16 15" fill="none" stroke="#555">
            <path d="M1.500 5.500v9h13v-12h-6" />
            <path d="M8 1h7v4H8z" fill="#555" stroke="none" />
            <circle cx="4" cy="3.500" r="3.500" fill="#555" stroke="none" />
            <path d="M4 8.500h8M4 11.500h8" strokeDasharray="2 1" />
          </svg>
        </StatusItem>
        <StatusItem>
          <svg width="19" height="18" viewBox="0 0 19 18" fill="none" stroke="#444" strokeWidth="1.400">
            <path d="M6 2C2.500 4 1 6.500 1 9s1.500 5 4 6.500" strokeDasharray="4 1.500" />
            <path d="M4 6h10M9 2v5l-3 5M10.500 9.500l7.500 8M18 9.500l-7.500 8" />
          </svg>
          辅助功能: 调查
        </StatusItem>
        <Views>
          <ViewButton $on aria-label="普通">
            <svg width="17" height="17" viewBox="0 0 17 17" fill="none" stroke="#555">
              <path d="M.5.5h16v16H.5zM.5 5.500h16M.5 10.500h16M5.500.5v16M11.500.5v16" />
            </svg>
          </ViewButton>
          <ViewButton aria-label="页面布局">
            <svg width="17" height="16" viewBox="0 0 17 16" fill="none" stroke="#555">
              <path d="M.5.5h16v15H.5zM4.500 3.500h8v9h-8zM6 6.500h5M6 8.500h5M6 10.500h5" />
            </svg>
          </ViewButton>
          <ViewButton aria-label="分页预览">
            <svg width="17" height="16" viewBox="0 0 17 16" fill="none" stroke="#555">
              <path d="M.5.5h16v15H.5zM6.500.5v8.500M.5 9h11V.5" />
            </svg>
          </ViewButton>
        </Views>
        <ZoomButton aria-label="缩小">
          <svg width="10" height="10" viewBox="0 0 10 10" stroke="#333">
            <path d="M0 4.500h10" />
          </svg>
        </ZoomButton>
        <Zoom defaultValue={50} aria-label="缩放" />
        <ZoomButton aria-label="放大">
          <svg width="10" height="10" viewBox="0 0 10 10" stroke="#333">
            <path d="M0 5.500h10M5.500 0v10" />
          </svg>
        </ZoomButton>
        <ZoomText>100%</ZoomText>
      </Status>
      <Taskbar>
        <TaskPart $w={60} $bg="#cde4f0" />
        <TaskPart $w={430} $bg="#ffffff" />
        <TaskPart $w={61} $ml={434} $bg="#f8f8f8" />
        <Clock>11:08</Clock>
      </Taskbar>
      <Watermark>
        <Site>知乎</Site>
        <span>@</span>
        <span>在蜀山湖边看夕阳</span>
      </Watermark>
    </Shell>
  );
}
